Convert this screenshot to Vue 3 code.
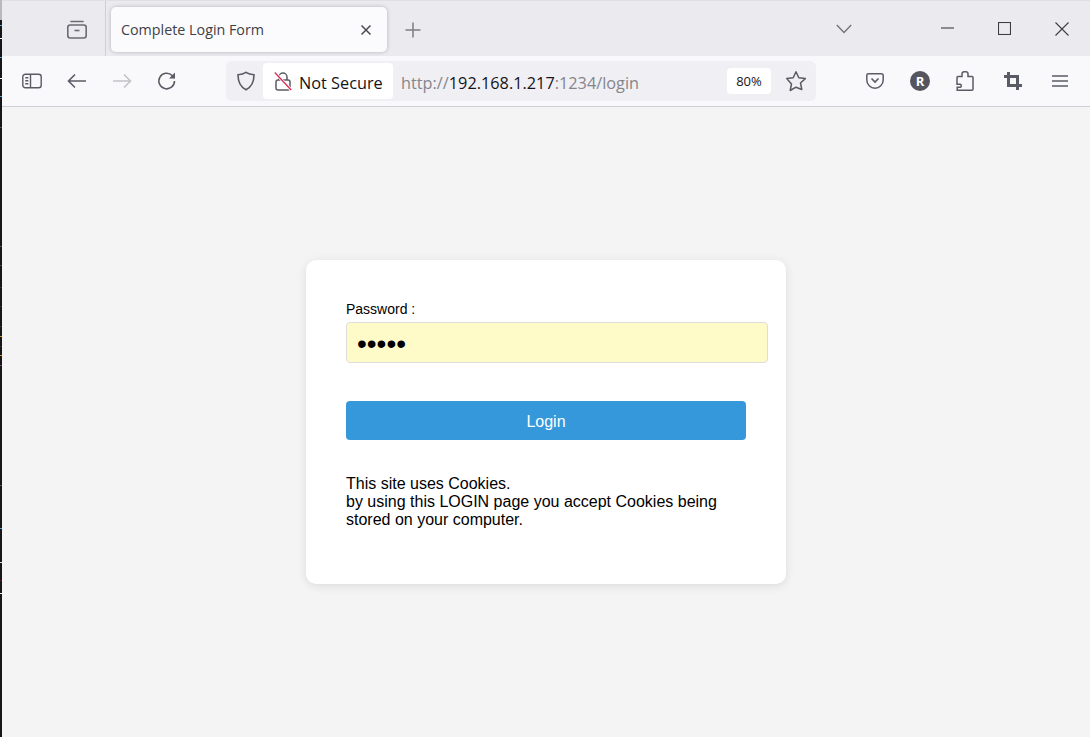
<script setup>
const ticks = [
  [25, '#4aa3d8'], [38, '#fff'], [57, '#4aa3d8'], [78, '#fff'], [96, '#4aa3d8'],
  [127, '#5a4a58'], [246, '#555'], [265, '#444'], [287, '#333'], [306, '#333'], [326, '#333'],
  [336, '#d98a2b'], [346, '#333'], [355, '#d98a2b'], [365, '#7a3f86'], [485, '#555'],
  [528, '#4aa3d8'], [562, '#ddd'], [580, '#7a1020'], [593, '#eee']
]
</script>

<template>
  <div class="screen">
    <div class="strip">
      <i v-for="t in ticks" :key="t[0]" class="tick" :style="{ top: t[0] + 'px', background: t[1] }"></i>
    </div>
    <div class="window">
      <header class="titlebar">
        <div class="tabs-left">
          <svg class="ico" width="22" height="22" viewBox="0 0 22 22" fill="none" stroke="#6b6b74" stroke-width="1.6">
            <path d="M5 3.5h12" stroke-linecap="round" />
            <rect x="1.8" y="7" width="18.4" height="13" rx="2.5" />
            <path d="M8.5 12.5h5" />
          </svg>
        </div>
        <div class="tab">
          <span class="tab-title">Complete Login Form</span>
          <svg width="12" height="12" viewBox="0 0 12 12" stroke="#4a4a52" stroke-width="1.5" fill="none">
            <path d="M1.5 1.5l9 9M10.5 1.5l-9 9" />
          </svg>
        </div>
        <svg class="plus" width="16" height="16" viewBox="0 0 16 16" stroke="#7c7c84" stroke-width="1.5" fill="none">
          <path d="M8 .5v15M.5 8h15" />
        </svg>
        <svg class="chevron" width="16" height="10" viewBox="0 0 16 10" stroke="#74747c" stroke-width="1.4" fill="none">
          <path d="M.8 1l7.2 7.4L15.200 1" />
        </svg>
        <div class="win-btns">
          <svg width="13" height="13" viewBox="0 0 13 13" stroke="#3c3c42" stroke-width="1.100" fill="none"><path d="M0 6h13" /></svg>
          <svg width="13" height="13" viewBox="0 0 13 13" stroke="#3c3c42" stroke-width="1.100" fill="none"><rect x=".5" y=".5" width="12" height="12" /></svg>
          <svg width="14" height="14" viewBox="0 0 14 14" stroke="#3c3c42" stroke-width="1.100" fill="none"><path d="M.5.5l13 13M13.500.5l-13 13" /></svg>
        </div>
      </header>

      <nav class="toolbar">
        <div class="nav-left">
          <svg width="20" height="16" viewBox="0 0 20 16" fill="none" stroke="#5b5b66" stroke-width="1.400">
            <rect x=".8" y="1.200" width="18.400" height="13.600" rx="2.500" />
            <path d="M8.500 1.200v13.600" />
            <path d="M3.300 4.800h3M3.300 7.800h3M3.300 10.800h3" />
          </svg>
          <svg width="20" height="16" viewBox="0 0 20 16" fill="none" stroke="#5b5b66" stroke-width="1.600">
            <path d="M19 8H1.500M8 1.500L1.500 8 8 14.500" />
          </svg>
          <svg width="20" height="16" viewBox="0 0 20 16" fill="none" stroke="#c2c2c8" stroke-width="1.600">
            <path d="M1 8h17.500M12 1.500L18.500 8 12 14.500" />
          </svg>
          <svg width="20" height="20" viewBox="0 0 20 20" fill="none" stroke="#5b5b66" stroke-width="1.600">
            <path d="M17.500 10a7.800 7.800 0 1 1-2.300-5.500L17.500 7" />
            <path d="M18 1.500V7.500H12" fill="#5b5b66" stroke="none" />
          </svg>
        </div>

        <div class="urlbar">
          <svg class="shield" width="20" height="20" viewBox="0 0 20 20" fill="none" stroke="#5b5b66" stroke-width="1.600">
            <path d="M10 1.300c2.600 1.800 5 2.300 8 2.500 0 6.600-1.400 11.700-8 15-6.600-3.300-8-8.400-8-15 3-.2 5.400-.7 8-2.500z" />
          </svg>
          <div class="secure">
            <svg width="18" height="20" viewBox="0 0 18 20" fill="none">
              <path d="M5 9V6a4 4 0 0 1 8 0v3" stroke="#5b5b66" stroke-width="1.500" />
              <rect x="2" y="9" width="14" height="10" rx="2" stroke="#5b5b66" stroke-width="1.500" />
              <path d="M.8 1.500L17.200 19" stroke="#fff" stroke-width="3" />
              <path d="M.8 1.500L17.200 19" stroke="#e22850" stroke-width="1.300" />
            </svg>
            <span class="secure-text">Not Secure</span>
          </div>
          <div class="address">http://<b>192.168.1.217</b>:1234/login</div>
          <div class="zoom">80%</div>
          <svg class="star" width="22" height="22" viewBox="0 0 22 22" fill="none" stroke="#5b5b66" stroke-width="1.500" stroke-linejoin="round">
            <path d="M11 1.800l2.800 6 6.500.8-4.800 4.400 1.300 6.500L11 17.200l-5.800 3.300 1.300-6.500L1.700 8.600l6.500-.8z" />
          </svg>
        </div>

        <div class="nav-right">
          <svg width="18" height="16" viewBox="0 0 18 16" fill="none" stroke="#5b5b66" stroke-width="1.500">
            <path d="M2.500.8h13a1.700 1.700 0 0 1 1.700 1.700v4.500a8.200 8.200 0 0 1-16.400 0V2.500A1.700 1.700 0 0 1 2.500.8z" />
            <path d="M5.500 5.500L9 9l3.500-3.500" stroke-width="1.700" />
          </svg>
          <span class="avatar">R</span>
          <svg width="18" height="20" viewBox="0 0 18 20" fill="none" stroke="#5b5b66" stroke-width="1.500">
            <path d="M1.200 19.200H16a1 1 0 0 0 1-1V6.500a1 1 0 0 0-1-1h-4V2.800a2.100 2.100 0 0 0-2.100-2H8a2 2 0 0 0-2 2v2.700H2a1 1 0 0 0-1 1v6.700h3.200a1 1 0 0 1 1 1v1a1 1 0 0 1-1 1H1.200z" />
          </svg>
          <svg class="wide" width="18" height="18" viewBox="0 0 18 18" fill="none" stroke="#5b5b66" stroke-width="3">
            <path d="M4.500 0v13.500H18M0 4.500h13.500V18" />
          </svg>
          <svg class="wide" width="16" height="14" viewBox="0 0 16 14" fill="none" stroke="#5b5b66" stroke-width="1.500">
            <path d="M0 2h16M0 7h16M0 12h16" />
          </svg>
        </div>
      </nav>

      <main class="page">
        <form class="card" @submit.prevent>
          <label class="label" for="pw">Password :</label>
          <input id="pw" class="input" type="password" value="admin" />
          <button class="btn" type="submit">Login</button>
          <p class="note">
            This site uses Cookies.<br />
            by using this LOGIN page you accept Cookies being stored on your computer.
          </p>
        </form>
      </main>
    </div>
  </div>
</template>

<style>
html, body { margin: 0; overflow: hidden; }
</style>

<style scoped>
.screen {
  display: flex;
  width: 1090px;
  height: 737px;
  position: relative;
  overflow: hidden;
  font-family: "Open Sans", sans-serif;
}
.strip {
  width: 2px;
  flex: none;
  background: linear-gradient(#b9b9bd 0 20px, #161616 20px);
  position: relative;
}
.tick {
  position: absolute;
  left: 0;
  width: 2px;
  height: 1px;
}
.window {
  flex: 1;
  min-width: 0;
  display: flex;
  flex-direction: column;
}
.titlebar {
  height: 56px;
  box-sizing: border-box;
  flex: none;
  display: flex;
  align-items: center;
  background: #eaeaef;
  border-top: 1px solid #e0e0e2;
}
.tabs-left {
  width: 104px;
  height: 55px;
  box-sizing: border-box;
  flex: none;
  display: flex;
  align-items: center;
  justify-content: flex-end;
  padding-right: 17px;
  border-right: 1px solid #cfcfd3;
}
.ico { display: block; margin-top: 1px; }
.tab {
  margin-left: 5px;
  width: 276px;
  height: 45px;
  margin-top: 2px;
  box-sizing: border-box;
  padding: 0 15px 0 10px;
  display: flex;
  align-items: center;
  justify-content: space-between;
  background: #fbfbfd;
  border-radius: 5px;
  box-shadow: 0 0 4px rgba(0, 0, 0, .22);
}
.tab-title {
  font-size: 14.3px;
  color: #3f3f46;
}
.plus { margin-left: 18px; margin-top: 2px; }
.chevron { margin-left: 415px; }
.win-btns {
  margin-left: auto;
  display: flex;
  align-items: center;
  gap: 44px;
  padding-right: 21px;
}
.toolbar {
  height: 51px;
  box-sizing: border-box;
  flex: none;
  display: flex;
  align-items: center;
  background: #f9f9fb;
  border-bottom: 1px solid #cfcfd3;
  padding-bottom: 1px;
}
.nav-left {
  width: 224px;
  flex: none;
  display: flex;
  align-items: center;
  gap: 25px;
  padding-left: 20px;
  box-sizing: border-box;
}
.urlbar {
  width: 590px;
  height: 40px;
  flex: none;
  display: flex;
  align-items: center;
  background: #f0f0f4;
  border-radius: 6px;
  position: relative;
}
.shield { margin-left: 10px; flex: none; }
.secure {
  margin-left: 7px;
  width: 130px;
  height: 36px;
  flex: none;
  box-sizing: border-box;
  padding-left: 11px;
  display: flex;
  align-items: center;
  gap: 7px;
  background: #fff;
  border-radius: 4px;
  font-size: 16.3px;
  color: #15141a;
}
.secure-text { padding-top: 4px; }
.address {
  margin-left: 8px;
  padding-top: 4px;
  font-size: 16.3px;
  color: #85858c;
  white-space: nowrap;
}
.address b {
  font-weight: 400;
  color: #15141a;
}
.zoom {
  margin-left: auto;
  width: 44px;
  height: 26px;
  flex: none;
  display: flex;
  align-items: center;
  justify-content: center;
  background: #fff;
  border-radius: 4px;
  font-size: 13px;
  color: #15141a;
}
.star { margin: 0 9px 0 14px; flex: none; }
.nav-right {
  flex: 1;
  display: flex;
  align-items: center;
  gap: 26px;
  padding-left: 50px;
}
.wide { margin-left: 4px; }
.avatar {
  width: 20px;
  height: 20px;
  border-radius: 50%;
  background: #55555f;
  color: #fff;
  font-size: 13px;
  font-weight: 700;
  display: flex;
  align-items: center;
  justify-content: center;
}
.page {
  flex: 1;
  min-height: 0;
  display: flex;
  align-items: center;
  justify-content: center;
  background: #f4f4f4;
}
.card {
  width: 480px;
  box-sizing: border-box;
  padding: 40px;
  background: #fff;
  border-radius: 10px;
  box-shadow: 0 2px 10px rgba(0, 0, 0, .1);
  font-family: "Liberation Sans", Arial, sans-serif;
  color: #000;
}
.label {
  display: block;
  height: 22px;
  line-height: 18px;
  font-size: 14px;
}
.input {
  display: block;
  width: 422px;
  height: 41px;
  box-sizing: border-box;
  margin: 0;
  padding: 2px 10px 0;
  border: 1px solid #ddd;
  border-radius: 4px;
  background: #fffbc8;
  font-family: "Liberation Sans", Arial, sans-serif;
  font-size: 28px;
  color: #000;
  outline: none;
}
.btn {
  display: block;
  width: 400px;
  height: 39px;
  margin: 38px 0 0;
  padding: 2px 0 0;
  border: 0;
  border-radius: 4px;
  background: #3498db;
  color: #fff;
  font-family: "Liberation Sans", Arial, sans-serif;
  font-size: 16px;
}
.note {
  margin: 35px 0 15px;
  font-size: 16px;
  line-height: 18px;
}
</style>
